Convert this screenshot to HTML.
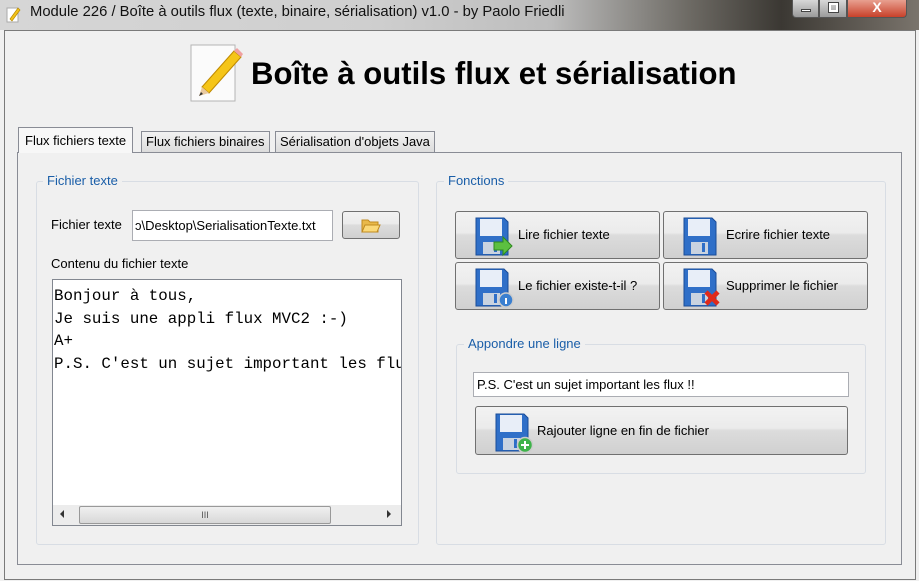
<!DOCTYPE html>
<html><head><meta charset="utf-8"><style>
*{box-sizing:border-box;margin:0;padding:0}
body{width:919px;height:581px;overflow:hidden;background:#f0f0f0;font-family:"Liberation Sans",sans-serif;font-size:13px;color:#000;position:relative}
.a{position:absolute}
.title{left:0;top:0;width:919px;height:30px;background:linear-gradient(90deg,#d6d6d6 0%,#cfcfcf 40%,#bdbdbd 60%,#6d6a64 75%,#3b3833 85%,#7a746c 100%)}
.win{left:4px;top:30px;width:912px;height:550px;border:1px solid #7a7a7a;background:#f0f0f0}
.grp{border:1px solid #d8dde4;border-radius:3px}
.leg{background:#f0f0f0;color:#1a5ea8;padding:0 4px;font-size:13px}
.btn{border:1px solid #707070;border-radius:3px;background:linear-gradient(#f2f2f2 0%,#ebebeb 45%,#dcdcdc 50%,#d0d0d0 100%)}
.inp{background:#fff;border:1px solid #abadb3}
.tab{border:1px solid #898c95;border-bottom:none;background:linear-gradient(#f2f2f2,#dcdcdc);font-size:13px;padding:0 4px;line-height:20px}
.bl{font-size:13px}
</style></head><body>
<div class="a title"></div>
<svg class="a" style="left:6px;top:6px" width="16" height="18" viewBox="0 0 16 18"><rect x="1" y="2" width="11" height="14" fill="#fff" stroke="#aaa"/><path d="M4 13 L12 2 L14 4 L6 15 Z" fill="#f2c21a" stroke="#b88a00" stroke-width=".7"/></svg>
<div class="a" style="left:30px;top:4px;font-size:14.8px;color:#111">Module 226 / Boîte à outils flux (texte, binaire, sérialisation) v1.0 - by Paolo Friedli</div>
<div class="a" style="left:792px;top:0;width:27px;height:18px;border:1px solid #555;border-top:none;border-radius:0 0 0 4px;background:linear-gradient(#d8d8d8,#9a9a9a)"><div class="a" style="left:8px;top:9px;width:10px;height:3px;background:#fff;border:1px solid #444"></div></div>
<div class="a" style="left:819px;top:0;width:28px;height:18px;border:1px solid #555;border-top:none;background:linear-gradient(#d8d8d8,#9a9a9a)"><div class="a" style="left:9px;top:3px;width:9px;height:9px;border:2px solid #fff;outline:1px solid #444"></div></div>
<div class="a" style="left:847px;top:0;width:60px;height:18px;border:1px solid #555;border-top:none;border-radius:0 0 4px 0;background:linear-gradient(#e8a090,#c8412a);color:#fff;font-weight:bold;text-align:center;font-size:14px;line-height:14px">X</div>
<div class="a win"></div>
<svg class="a" style="left:188px;top:43px" width="58" height="60" viewBox="0 0 58 60"><path d="M3 2h44v56H3z" fill="#fbfbfb" stroke="#b5b5b5"/><path d="M14 44 L46 8 L53 14 L21 50 Z" fill="#f5c518" stroke="#c08a00"/><path d="M46 8 L53 14 L55 11 L49 5Z" fill="#f0a0a0"/><path d="M14 44 L21 50 L11 53Z" fill="#e8c9a0"/><path d="M11 53 l2-4 2 2z" fill="#333"/></svg>
<div class="a" style="left:251px;top:56px;font-size:31.1px;font-weight:bold">Boîte à outils flux et sérialisation</div>
<!-- tabs -->
<div class="a" style="left:17px;top:152px;width:885px;height:413px;border:1px solid #898c95;background:#f0f0f0"></div>
<div class="a tab" style="left:141px;top:131px;height:21px">Flux fichiers binaires</div>
<div class="a tab" style="left:275px;top:131px;height:21px">Sérialisation d'objets Java</div>
<div class="a tab" style="left:18px;top:127px;height:26px;background:#f7f7f7;line-height:26px;padding:0 6px">Flux fichiers texte</div>
<!-- left group -->
<div class="a grp" style="left:36px;top:181px;width:383px;height:364px"></div>
<div class="a leg" style="left:43px;top:173px">Fichier texte</div>
<div class="a bl" style="left:51px;top:217px">Fichier texte</div>
<div class="a inp" style="left:132px;top:210px;width:201px;height:31px;overflow:hidden;white-space:nowrap;line-height:29px;padding-left:2px">ɔ\Desktop\SerialisationTexte.txt</div>
<div class="a btn" style="left:342px;top:211px;width:58px;height:28px"><svg class="a" style="left:18px;top:6px" width="20" height="15" viewBox="0 0 20 15"><path d="M1 2h6l2 2h8v10H1z" fill="#e9b94a" stroke="#c08a20"/><path d="M4 7h15l-3 7H1z" fill="#fbd978" stroke="#c08a20"/></svg></div>
<div class="a bl" style="left:51px;top:256px">Contenu du fichier texte</div>
<div class="a inp" style="left:52px;top:279px;width:350px;height:247px;border-color:#828790;font-family:'Liberation Mono',monospace;font-size:15.8px;line-height:22.5px;padding:5px 0 0 1px;white-space:pre;overflow:hidden">Bonjour à tous,
Je suis une appli flux MVC2 :-)
A+
P.S. C'est un sujet important les flux !!</div>
<div class="a" style="left:53px;top:505px;width:348px;height:20px;background:#ececec"></div>
<div class="a" style="left:79px;top:506px;width:252px;height:18px;border:1px solid #999;border-radius:2px;background:linear-gradient(#f0f0f0,#d8d8d8);font-size:9px;text-align:center;line-height:16px;color:#555">III</div>
<div class="a" style="left:60px;top:510px;width:0;height:0;border:4px solid transparent;border-right-color:#333;border-left:none"></div>
<div class="a" style="left:387px;top:510px;width:0;height:0;border:4px solid transparent;border-left-color:#333;border-right:none"></div>
<!-- right group -->
<div class="a grp" style="left:436px;top:181px;width:450px;height:364px"></div>
<div class="a leg" style="left:444px;top:173px">Fonctions</div>
<svg width="0" height="0" style="position:absolute"><defs><g id="fd"><path d="M1 1h28l4 4v33H1z" fill="#2f6fc8" stroke="#1a4c98"/><rect x="5" y="2" width="22" height="17" fill="#e8eef8"/><rect x="8" y="25" width="17" height="12" fill="#c9d3e0"/><rect x="19" y="26" width="3" height="9" fill="#2f6fc8"/></g></defs></svg>
<div class="a btn" style="left:455px;top:211px;width:205px;height:48px"><svg class="a" style="left:19px;top:5px" width="40" height="40"><use href="#fd"/><path d="M19 25h9v-5l9 9-9 9v-5h-9z" fill="#5cc040" stroke="#2d8a1e"/></svg><span class="a" style="left:62px;top:15px">Lire fichier texte</span></div>
<div class="a btn" style="left:663px;top:211px;width:205px;height:48px"><svg class="a" style="left:19px;top:5px" width="40" height="40"><use href="#fd"/></svg><span class="a" style="left:62px;top:15px">Ecrire fichier texte</span></div>
<div class="a btn" style="left:455px;top:262px;width:205px;height:48px"><svg class="a" style="left:19px;top:5px" width="40" height="40"><use href="#fd"/><circle cx="31" cy="32" r="7" fill="#3a7fd0" stroke="#ccc" stroke-width="1.5"/><rect x="30" y="30" width="2" height="6" fill="#fff"/></svg><span class="a" style="left:62px;top:15px">Le fichier existe-t-il ?</span></div>
<div class="a btn" style="left:663px;top:262px;width:205px;height:48px"><svg class="a" style="left:19px;top:5px" width="40" height="40"><use href="#fd"/><path d="M23 24l12 12M35 24l-12 12" stroke="#e02a1a" stroke-width="4.5"/></svg><span class="a" style="left:62px;top:15px">Supprimer le fichier</span></div>
<div class="a grp" style="left:456px;top:344px;width:410px;height:130px"></div>
<div class="a leg" style="left:464px;top:336px">Appondre une ligne</div>
<div class="a inp" style="left:473px;top:372px;width:376px;height:25px;line-height:23px;padding-left:3px">P.S. C'est un sujet important les flux !!</div>
<div class="a btn" style="left:475px;top:406px;width:373px;height:49px"><svg class="a" style="left:19px;top:5px" width="40" height="42"><use href="#fd" y="1"/><circle cx="30" cy="33" r="7.5" fill="#3fb34a" stroke="#ccc" stroke-width="1.5"/><path d="M30 29v8M26 33h8" stroke="#fff" stroke-width="2"/></svg><span class="a" style="left:61px;top:16px">Rajouter ligne en fin de fichier</span></div>
</body></html>
